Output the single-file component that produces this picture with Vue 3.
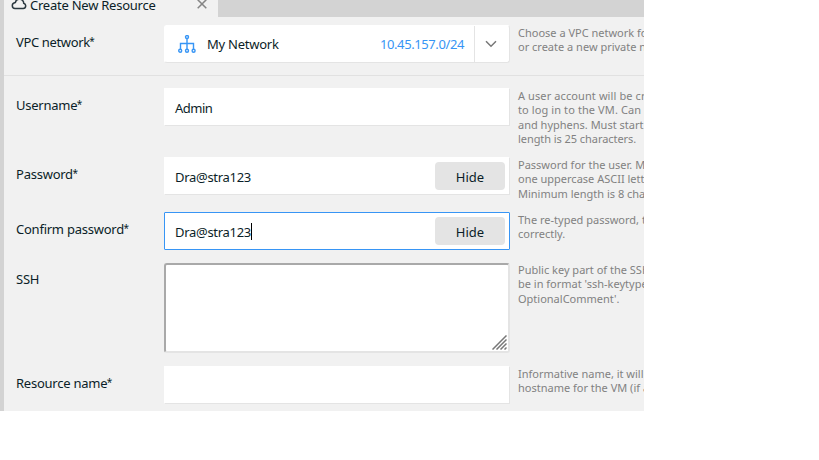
<script setup>
import { ref } from 'vue'

const rows = ref([
  { id: 'vpc', label: 'VPC network', required: true, type: 'select', value: 'My Network', hint: ['Choose a VPC network for', 'or create a new private n'] },
  { id: 'user', label: 'Username', required: true, type: 'text', value: 'Admin', hint: ['A user account will be cr', 'to log in to the VM. Can', 'and hyphens. Must start', 'length is 25 characters.'] },
  { id: 'pass', label: 'Password', required: true, type: 'password', value: 'Dra@stra123', hint: ['Password for the user. M', 'one uppercase ASCII lett', 'Minimum length is 8 cha'] },
  { id: 'confirm', label: 'Confirm password', required: true, type: 'password', value: 'Dra@stra123', focused: true, hint: ['The re-typed password, t', 'correctly.'] },
  { id: 'ssh', label: 'SSH', type: 'area', value: '', hint: ['Public key part of the SSH', "be in format 'ssh-keytype", "OptionalComment'."] },
  { id: 'name', label: 'Resource name', required: true, type: 'text', value: '', hint: ['Informative name, it will', 'hostname for the VM (if a'] },
])
</script>

<template>
  <main class="panel">
    <header class="tabs">
      <div class="tab">
        <svg class="cloud" width="16" height="14" viewBox="0 0 16 14">
          <path d="M4 12.500h8.200a2.700 2.700 0 0 0 .5-5.300C12.800 5 11 3.200 8.400 3.200 6.300 3.200 4.800 4.400 4.400 6.400 2.500 6.600 1.300 7.800 1.300 9.500c0 1.800 1.100 3 2.700 3z" />
        </svg>
        <span class="title">Create New Resource</span>
        <svg class="close" width="10" height="10" viewBox="0 0 10 10"><path d="M.7.7l8.600 8.600M9.300.7L.7 9.300" /></svg>
      </div>
    </header>
    <form class="form">
      <section v-for="row in rows" :key="row.id" class="row" :class="row.id">
        <label class="label">{{ row.label }}<span v-if="row.required" class="star">*</span></label>
        <div class="field" :class="[row.type, { focused: row.focused }]">
          <template v-if="row.type === 'select'">
            <svg class="net" width="18" height="18" viewBox="0 0 18 18">
              <path d="M9 3.500v11M2.500 14.300V8.500h13v5.800" />
              <circle cx="9" cy="2" r="1.500" /><circle cx="2.200" cy="15.700" r="1.500" />
              <circle cx="9" cy="15.700" r="1.500" /><circle cx="15.600" cy="15.700" r="1.500" />
            </svg>
            <span class="value">{{ row.value }}</span>
            <span class="cidr">10.45.157.0/24</span>
            <span class="drop"><svg width="12" height="8" viewBox="0 0 12 8"><path d="M1 1.200l5 5 5-5" /></svg></span>
          </template>
          <template v-else-if="row.type === 'area'">
            <svg class="grip" width="15" height="15" viewBox="0 0 15 15"><path d="M.5 14.500l14-14M4.500 14.500l10-10M8.500 14.500l6-6M12.500 14.500l2-2" /></svg>
          </template>
          <template v-else>
            <span class="value">{{ row.value }}</span>
            <i v-if="row.focused" class="caret"></i>
            <button v-if="row.type === 'password'" type="button" class="hide">Hide</button>
          </template>
        </div>
        <p class="hint"><span v-for="line in row.hint" :key="line">{{ line }}</span></p>
      </section>
    </form>
  </main>
</template>

<style>
body { background: #fff; }
</style>

<style scoped>
* { box-sizing: border-box; }
.panel {
  width: 644px;
  height: 411px;
  overflow: hidden;
  background: #f1f1f1;
  border-left: 4px solid #d3d3d3;
  color: #0b1e28;
  font: 13px/18px "Noto Sans", sans-serif;
  letter-spacing: -0.24px;
}
.tabs { height: 17px; background: #d3d3d3; }
.tab {
  display: flex;
  width: 214px;
  height: 17px;
  padding-left: 7px;
  background: #f1f1f1;
}
svg { display: block; flex: none; fill: none; }
.cloud { margin-top: -4px; stroke: #2b3840; stroke-width: 1.5; }
.title { margin: -4px 0 0 3px; width: 130px; white-space: nowrap; }
.close { margin: -1px 0 0 37px; stroke: #858585; stroke-width: 1.5; }
.form { padding-top: 8px; }
.row {
  display: grid;
  grid-template-columns: 148px 346px 134px;
  padding-left: 12px;
  align-items: start;
}
.vpc { height: 51px; border-bottom: 1px solid #e1e1e1; }
.user { height: 81px; padding-top: 12px; }
.pass { height: 55px; }
.confirm { height: 51px; }
.ssh { height: 103px; }
.label { padding-top: 8px; white-space: nowrap; }
.vpc .label { letter-spacing: -0.36px; }
.ssh .label { padding-top: 7px; }
.star { font-size: 10px; line-height: 1; margin-left: -0.5px; vertical-align: 2px; }
.field {
  display: flex;
  align-items: center;
  height: 38px;
  padding-left: 10px;
  background: #fff;
  border: 1px solid;
  border-color: #fff #e4e4e4 #e4e4e4 #fff;
}
.value { padding-top: 2px; white-space: nowrap; }
.text .value { letter-spacing: -0.5px; }
.select { border-radius: 3px; padding-left: 13px; }
.select .value { padding: 0 0 1px; }
.net { margin-right: 11px; stroke: #3795f5; stroke-width: 1.4; }
.cidr { margin-left: auto; color: #3795f5; padding-right: 10px; letter-spacing: -0.4px; }
.drop {
  display: flex;
  align-items: center;
  justify-content: center;
  width: 35px;
  height: 36px;
  padding-right: 2px;
  border-left: 1px solid #e4e4e4;
  stroke: #777;
  stroke-width: 1.5;
}
.focused { border-color: #3795f5; border-radius: 1px; }
.password .value { letter-spacing: -0.3px; }
.caret { width: 1px; height: 17px; background: #000; }
.hide {
  width: 70px;
  height: 28px;
  margin: 0 4px 0 auto;
  padding: 2px 0 0;
  border: 0;
  border-radius: 4px;
  background: #e4e4e4;
  color: inherit;
  font: inherit;
  letter-spacing: 0;
}
.area {
  height: 90px;
  border: 2px solid;
  border-color: #a9a9a9 #e4e4e4 #e4e4e4 #a9a9a9;
  border-radius: 3px;
  align-items: flex-end;
  justify-content: flex-end;
  padding: 0 1px 1px 0;
}
.grip { stroke: #777; stroke-width: 1.5; }
.hint {
  margin: 1px 0 0 8px;
  color: #818181;
  font-size: 11px;
  line-height: 14.3px;
  letter-spacing: 0;
  white-space: nowrap;
}
.hint span { display: block; }
.user .hint span:nth-child(-n+2) { letter-spacing: 0.1px; }
.user .hint span:last-child { letter-spacing: -0.06px; }
.ssh .hint { margin-top: 0; }
</style>
